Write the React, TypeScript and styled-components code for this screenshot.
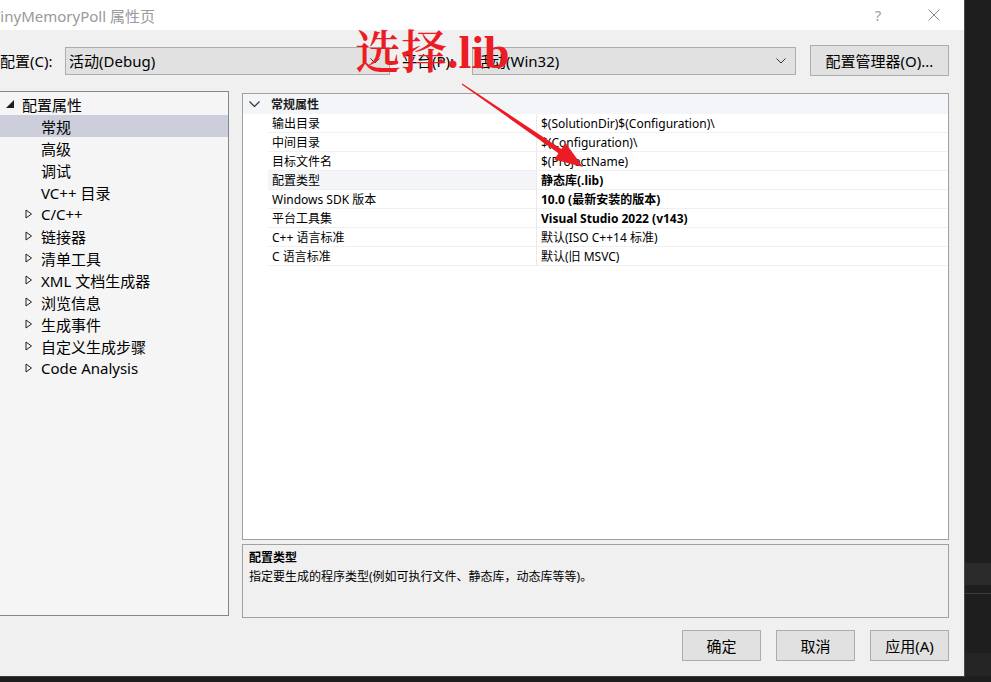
import React from "react";
import styled, { createGlobalStyle } from "styled-components";

const UI = `"Segoe UI", "Noto Sans", "Noto Sans CJK SC", sans-serif`;

const Global = createGlobalStyle`
  html, body { margin: 0; padding: 0; background: #1e1e1e; overflow: hidden; }
  * { box-sizing: border-box; }
`;

const Screen = styled.div`
  width: 991px;
  height: 682px;
  display: flex;
  background: #1e1e1e;
  overflow: hidden;
  font-family: ${UI};
`;

const Dialog = styled.div`
  position: relative;
  width: 965px;
  height: 677px;
  flex: none;
  display: flex;
  flex-direction: column;
  background: #f0f0f0;
  border-right: 1px solid #4a4a4a;
  border-bottom: 1px solid #3a3a3a;
  overflow: hidden;
`;

const SideStrip = styled.div`
  flex: 1;
  display: flex;
  flex-direction: column;
  height: 676px;
`;

const Band = styled.div<{ $h: number; $bg: string }>`
  height: ${(p) => p.$h}px;
  background: ${(p) => p.$bg};
  flex: none;
`;

const TitleBar = styled.div`
  height: 30px;
  flex: none;
  background: #ffffff;
  display: flex;
  align-items: center;
  padding-right: 2px;
`;

const TitleText = styled.div`
  flex: 1;
  margin-left: -8px;
  font-size: 15px;
  color: #999999;
  white-space: nowrap;
`;

const TitleButton = styled.div`
  width: 56px;
  height: 30px;
  display: flex;
  align-items: center;
  justify-content: center;
  color: #a0a0a0;
  font-size: 15px;
`;

const ConfigBar = styled.div`
  height: 61px;
  flex: none;
  display: flex;
  align-items: center;
  padding-right: 15px;
`;

const Label = styled.div<{ $ml?: number; $w: number }>`
  margin-left: ${(p) => p.$ml ?? 0}px;
  width: ${(p) => p.$w}px;
  font-size: 15px;
  color: #000;
  white-space: nowrap;
`;

const Combo = styled.div<{ $w: number }>`
  width: ${(p) => p.$w}px;
  height: 28px;
  background: #e1e1e1;
  border: 1px solid #adadad;
  display: flex;
  align-items: center;
  justify-content: space-between;
  padding: 0 9px 0 3px;
  font-size: 15px;
  color: #000;
`;

const Button = styled.div<{ $w: number; $h: number; $ml?: number }>`
  width: ${(p) => p.$w}px;
  height: ${(p) => p.$h}px;
  margin-left: ${(p) => p.$ml ?? 0}px;
  background: #e1e1e1;
  border: 1px solid #adadad;
  display: flex;
  align-items: center;
  justify-content: center;
  font-size: 15px;
  color: #000;
  white-space: nowrap;
`;

const Main = styled.div`
  display: grid;
  grid-template-columns: 229px 707px;
  column-gap: 13px;
  height: 526px;
  flex: none;
`;

const TreePanel = styled.div`
  height: 525px;
  background: #f5f5f5;
  border: 1px solid #828790;
  border-left: none;
  padding-top: 1px;
`;

const TreeRow = styled.div<{ $level: number; $selected?: boolean }>`
  height: 22px;
  display: flex;
  align-items: center;
  padding-left: ${(p) => 3 + p.$level * 19}px;
  background: ${(p) => (p.$selected ? "#cccedb" : "transparent")};
  font-size: 15px;
  color: #000;
  white-space: nowrap;
`;

const Expander = styled.div`
  width: 19px;
  height: 22px;
  flex: none;
  display: flex;
  align-items: center;
  padding-left: 3px;
`;

const RightCol = styled.div`
  display: flex;
  flex-direction: column;
  padding-top: 2px;
  gap: 4px;
`;

const Grid = styled.div`
  height: 447px;
  background: #ffffff;
  border: 1px solid #a0a0a0;
`;

const CategoryRow = styled.div`
  height: 20px;
  display: flex;
  align-items: center;
  background: #f3f5f9;
  font-size: 12px;
  font-weight: bold;
  color: #1e1e1e;
`;

const CatChevron = styled.div`
  width: 28px;
  padding-left: 6px;
  display: flex;
  align-items: center;
`;

const PropRow = styled.div`
  height: 19px;
  display: grid;
  grid-template-columns: 25px 268px 1px 1fr;
`;

const Cell = styled.div<{ $bold?: boolean; $shade?: boolean }>`
  display: flex;
  align-items: center;
  padding-left: 4px;
  border-bottom: 1px solid #f0f0f0;
  background: ${(p) => (p.$shade ? "#f3f5f9" : "#ffffff")};
  font-size: 12px;
  font-weight: ${(p) => (p.$bold ? "bold" : "normal")};
  color: #000;
  white-space: nowrap;
`;

const Gutter = styled.div``;

const Divider = styled.div`
  background: #eaeaea;
`;

const Description = styled.div`
  height: 74px;
  border: 1px solid #a0a0a0;
  background: #f0f0f0;
  padding: 3px 6px;
  font-size: 12px;
  color: #000;
  line-height: 19px;
`;

const DescTitle = styled.div`
  font-weight: bold;
`;

const Footer = styled.div`
  flex: 1;
  display: flex;
  justify-content: flex-end;
  align-items: flex-start;
  padding-top: 13px;
  padding-right: 15px;
  gap: 15px;
`;

const Annotation = styled.div`
  position: absolute;
  left: 355px;
  top: 27px;
  color: #ec1c24;
  font-family: "Liberation Serif", "Noto Serif CJK SC", "Noto Sans CJK SC", serif;
  font-size: 46px;
  font-weight: 600;
  line-height: 52px;
  white-space: nowrap;
  pointer-events: none;
`;

const LibText = styled.span`
  font-weight: bold;
`;

const ArrowLayer = styled.svg`
  position: absolute;
  left: 0;
  top: 0;
  pointer-events: none;
`;

const Chevron = () => (
  <svg width="10" height="6" viewBox="0 0 10 6">
    <path d="M0.5 0.5 L5 5 L9.5 0.5" fill="none" stroke="#333" strokeWidth="1" />
  </svg>
);

const ExpandedIcon = () => (
  <svg width="8" height="8" viewBox="0 0 8 8">
    <polygon points="8,0 8,8 0,8" fill="#1e1e1e" />
  </svg>
);

const CollapsedIcon = () => (
  <svg width="8" height="10" viewBox="0 0 8 10">
    <polygon points="1,1 6.5,5 1,9" fill="none" stroke="#1e1e1e" strokeWidth="1" />
  </svg>
);

type TreeItem = { label: string; level: number; kind: "open" | "closed" | "leaf"; selected?: boolean };

const tree: TreeItem[] = [
  { label: "配置属性", level: 0, kind: "open" },
  { label: "常规", level: 1, kind: "leaf", selected: true },
  { label: "高级", level: 1, kind: "leaf" },
  { label: "调试", level: 1, kind: "leaf" },
  { label: "VC++ 目录", level: 1, kind: "leaf" },
  { label: "C/C++", level: 1, kind: "closed" },
  { label: "链接器", level: 1, kind: "closed" },
  { label: "清单工具", level: 1, kind: "closed" },
  { label: "XML 文档生成器", level: 1, kind: "closed" },
  { label: "浏览信息", level: 1, kind: "closed" },
  { label: "生成事件", level: 1, kind: "closed" },
  { label: "自定义生成步骤", level: 1, kind: "closed" },
  { label: "Code Analysis", level: 1, kind: "closed" },
];

type Prop = { name: string; value: string; bold?: boolean; selected?: boolean };

const props: Prop[] = [
  { name: "输出目录", value: "$(SolutionDir)$(Configuration)\\" },
  { name: "中间目录", value: "$(Configuration)\\" },
  { name: "目标文件名", value: "$(ProjectName)" },
  { name: "配置类型", value: "静态库(.lib)", bold: true, selected: true },
  { name: "Windows SDK 版本", value: "10.0 (最新安装的版本)", bold: true },
  { name: "平台工具集", value: "Visual Studio 2022 (v143)", bold: true },
  { name: "C++ 语言标准", value: "默认(ISO C++14 标准)" },
  { name: "C 语言标准", value: "默认(旧 MSVC)" },
];

export default function App() {
  return (
    <>
      <Global />
      <Screen>
        <Dialog>
          <TitleBar>
            <TitleText>TinyMemoryPoll 属性页</TitleText>
            <TitleButton>?</TitleButton>
            <TitleButton>
              <svg width="12" height="12" viewBox="0 0 12 12">
                <path d="M0.5 0.5 L11.5 11.5 M11.5 0.5 L0.5 11.5" stroke="#8a8a8a" strokeWidth="1" />
              </svg>
            </TitleButton>
          </TitleBar>

          <ConfigBar>
            <Label $w={65}>配置(C):</Label>
            <Combo $w={325}>
              <span>活动(Debug)</span>
              <Chevron />
            </Combo>
            <Label $ml={12} $w={70}>平台(P):</Label>
            <Combo $w={324}>
              <span>活动(Win32)</span>
              <Chevron />
            </Combo>
            <Button $w={139} $h={31} $ml={14}>
              配置管理器(O)...
            </Button>
          </ConfigBar>

          <Main>
            <TreePanel>
              {tree.map((t) => (
                <TreeRow key={t.label} $level={t.level} $selected={t.selected}>
                  <Expander>
                    {t.kind === "open" && <ExpandedIcon />}
                    {t.kind === "closed" && <CollapsedIcon />}
                  </Expander>
                  {t.label}
                </TreeRow>
              ))}
            </TreePanel>

            <RightCol>
              <Grid>
                <CategoryRow>
                  <CatChevron>
                    <svg width="11" height="6" viewBox="0 0 11 6">
                      <path d="M0.5 0.5 L5.5 5.5 L10.5 0.5" fill="none" stroke="#333" strokeWidth="1.2" />
                    </svg>
                  </CatChevron>
                  常规属性
                </CategoryRow>
                {props.map((p) => (
                  <PropRow key={p.name}>
                    <Gutter />
                    <Cell $shade={p.selected}>{p.name}</Cell>
                    <Divider />
                    <Cell $bold={p.bold}>{p.value}</Cell>
                  </PropRow>
                ))}
              </Grid>
              <Description>
                <DescTitle>配置类型</DescTitle>
                <div>指定要生成的程序类型(例如可执行文件、静态库，动态库等等)。</div>
              </Description>
            </RightCol>
          </Main>

          <Footer>
            <Button $w={79} $h={31}>确定</Button>
            <Button $w={79} $h={31}>取消</Button>
            <Button $w={79} $h={31}>应用(A)</Button>
          </Footer>

          <Annotation>
            选择<LibText>.lib</LibText>
          </Annotation>
          <ArrowLayer width="965" height="677" viewBox="0 0 965 677">
            <polygon
              points="461.7,84.5 462.3,83.5 561.3,149.1 565.6,142.9 583,167 554.2,159.5 558.5,153.3"
              fill="#ec1c24"
            />
          </ArrowLayer>
        </Dialog>
        <SideStrip>
          <Band $h={563} $bg="#1e1e1e" />
          <Band $h={22} $bg="#2b2b2b" />
          <Band $h={8} $bg="#1e1e1e" />
          <Band $h={1} $bg="#3c3c3c" />
          <Band $h={59} $bg="#1e1e1e" />
          <Band $h={23} $bg="#252526" />
        </SideStrip>
      </Screen>
    </>
  );
}
